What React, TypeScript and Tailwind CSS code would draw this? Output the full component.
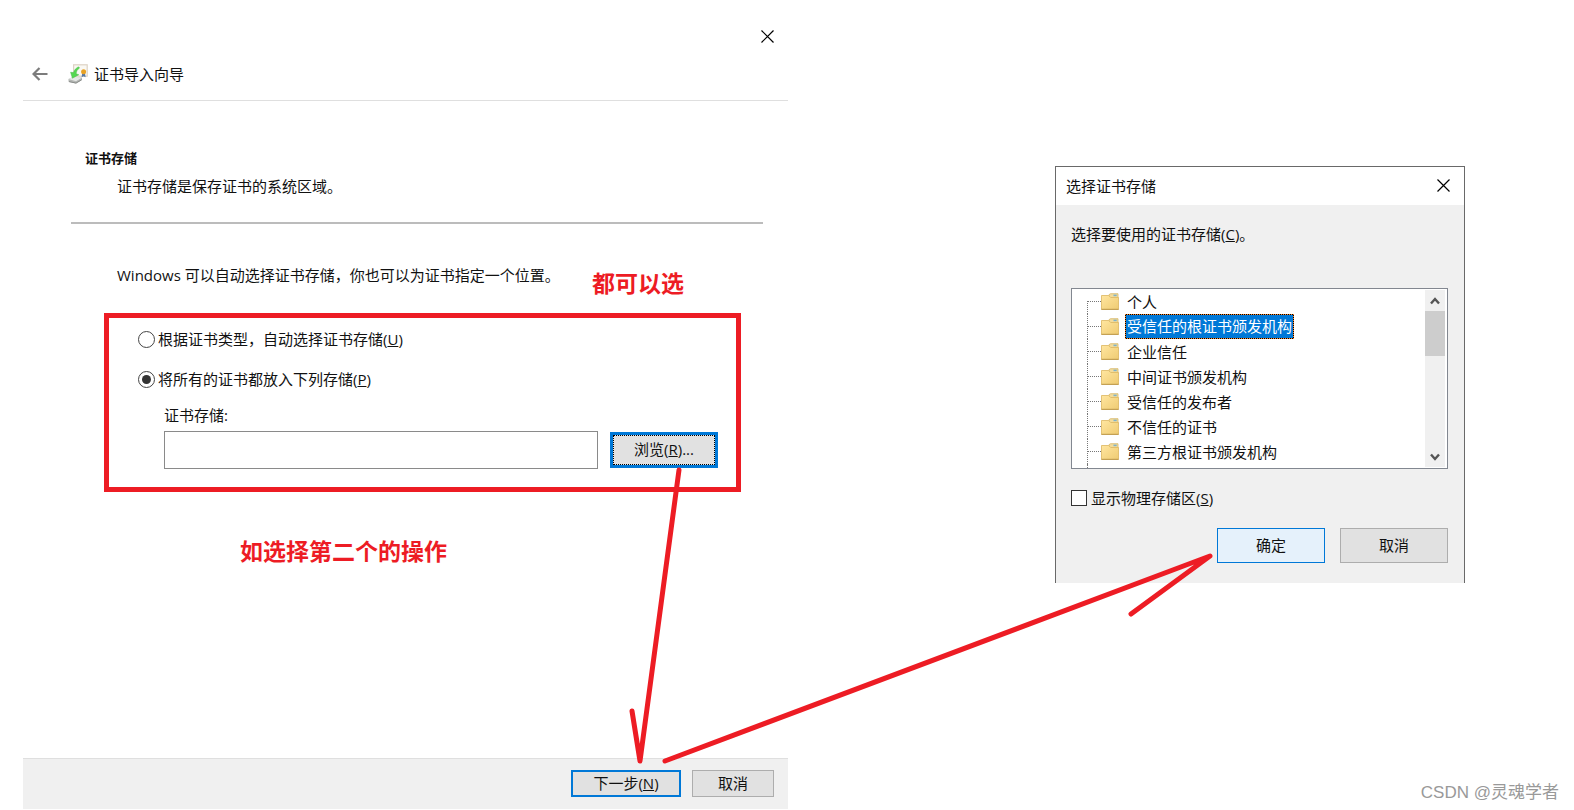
import { useState } from 'react';

const stores = [
  '个人',
  '受信任的根证书颁发机构',
  '企业信任',
  '中间证书颁发机构',
  '受信任的发布者',
  '不信任的证书',
  '第三方根证书颁发机构',
];

function CloseIcon() {
  return (
    <svg viewBox="0 0 13 13" className="size-[13px]" aria-hidden="true">
      <path d="M0.5 0.5l12 12M12.5 0.5l-12 12" stroke="#000" strokeWidth="1.2" fill="none" />
    </svg>
  );
}

function BackIcon() {
  return (
    <svg viewBox="0 0 16 14" className="h-[14px] w-4" aria-hidden="true">
      <path d="M15.5 7H1.5M7.5 1L1.5 7l6 6" stroke="#7c7c7c" strokeWidth="2.2" fill="none" />
    </svg>
  );
}

function CertificateIcon() {
  return (
    <svg viewBox="0 0 20 20" className="size-5" aria-hidden="true">
      <rect x="5.6" y="0.8" width="13.6" height="11.4" fill="#faf8f3" stroke="#ddd2c4" strokeWidth="1.2" />
      <path d="M14.200 9.500l-.6 3.700 2-1 2 1-.6-3.700z" fill="#5577a5" />
      <circle cx="15.600" cy="7.800" r="2.500" fill="#e8a225" />
      <path d="M0.500 15l5-2.200 8.500.8v2.400L8 19.500l-7.500-1.700z" fill="#b4b7b4" />
      <path d="M0.500 15l5-2.200 8.500.8-6 3.600z" fill="#e6e8e5" />
      <path d="M1 17.600l7 1.500 5.600-3.300" stroke="#8a8d8a" fill="none" />
      <path d="M10.500 2.800C8 4.200 6 6 5.600 8.600L2.600 8.200l1.800 6 6.400-3.400-2.600-1C8.300 7.500 9.200 5.400 11.600 4z" fill="#55d850" stroke="#4cbb4c" strokeWidth="0.500" />
    </svg>
  );
}

function FolderIcon() {
  return (
    <svg viewBox="0 0 18 17" className="h-[17px] w-[18px] shrink-0" aria-hidden="true">
      <defs>
        <linearGradient id="folder" x1="0" y1="0" x2="1" y2="1">
          <stop offset="0" stopColor="#ffe6a0" />
          <stop offset="1" stopColor="#efcb72" />
        </linearGradient>
      </defs>
      <path d="M8 4.500V1.700L9.500 0.700h7.500v5H8z" fill="#f3dc9c" stroke="#d6b566" strokeWidth="0.800" />
      <path d="M12.500 1.600h3.200v1.600h-3.200z" fill="#7fb2c8" />
      <path d="M0.500 2.500h7.200l2 2h7.800v12H0.500z" fill="url(#folder)" stroke="#dcb65f" strokeWidth="0.800" />
      <path d="M0.500 16.300h17" stroke="#b8944a" strokeWidth="0.900" />
    </svg>
  );
}

function Chevron({ up = false }: { up?: boolean }) {
  return (
    <svg viewBox="0 0 10 8" className="h-2 w-[10px]" aria-hidden="true">
      <path d={up ? 'M1 6.500l4-4.500 4 4.500' : 'M1 1.500L5 6l4-4.500'} stroke="#555" strokeWidth="2.400" fill="none" />
    </svg>
  );
}

function ImportWizard() {
  const [mode, setMode] = useState('manual');
  const radio =
    'size-[17px] shrink-0 appearance-none rounded-full border border-[#444] bg-white bg-clip-content p-[3px] checked:bg-[#333]';
  return (
    <section className="relative flex flex-1 flex-col">
      <div className="flex h-12 items-center justify-end pt-6 pr-[14px]">
        <button aria-label="关闭"><CloseIcon /></button>
      </div>
      <header className="flex h-[53px] items-center border-b border-[#dfdfdf] pl-[9px]">
        <button aria-label="返回" className="mr-5"><BackIcon /></button>
        <CertificateIcon />
        <h1 className="ml-[6px] leading-5">证书导入向导</h1>
      </header>

      <div className="flex-1 pt-[47px]">
        <h2 className="pl-[62px] text-[13px] leading-5 font-bold">证书存储</h2>
        <p className="mt-2 pl-[94px]">证书存储是保存证书的系统区域。</p>
        <hr className="mt-[26px] mr-[25px] ml-12 border-t-2 border-[#bcbcbc]" />
        <p className="mt-[41px] pl-[94px]">Windows 可以自动选择证书存储，你也可以为证书指定一个位置。</p>

        <div className="mt-7 mr-[47px] ml-[81px] border-[5px] border-[#ed1c24] pt-[11px] pr-[18px] pb-[18px] pl-[29px]">
          <label className="flex items-center gap-[3px]">
            <input type="radio" name="mode" checked={mode === 'auto'} onChange={() => setMode('auto')} className={radio} />
            <span>根据证书类型，自动选择证书存储(<u>U</u>)</span>
          </label>
          <label className="mt-5 flex items-center gap-[3px]">
            <input type="radio" name="mode" checked={mode === 'manual'} onChange={() => setMode('manual')} className={radio} />
            <span>将所有的证书都放入下列存储(<u>P</u>)</span>
          </label>
          <div className="mt-4 pl-[26px]">
            <label htmlFor="store" className="block">证书存储:</label>
            <div className="mt-[6px] flex items-center gap-3">
              <input id="store" type="text" className="h-[38px] min-w-0 flex-1 border border-[#8a8a8a] bg-white px-2 outline-none" />
              <button className="h-9 w-[108px] border-[3px] border-[#0078d7] bg-[#e1e1e1]">
                <span className="flex h-full items-center justify-center border border-dotted border-black pb-[2px]">
                  <span>浏览(<u>R</u>)...</span>
                </span>
              </button>
            </div>
          </div>
        </div>
        <p className="mt-[43px] pl-[217px] text-[23px] leading-8 font-bold text-[#ed1c24]">如选择第二个的操作</p>
      </div>

      <p className="absolute top-[267px] left-[569px] text-[23px] leading-8 font-bold text-[#ed1c24]">都可以选</p>

      <footer className="flex h-[51px] items-center justify-end gap-[11px] border-t border-[#dfdfdf] bg-[#f0f0f0] pr-[14px] pb-[2px]">
        <button className="flex h-[27px] w-[110px] items-center justify-center border-2 border-[#0078d7] bg-[#e1e1e1]">
          <span>下一步(<u>N</u>)</span>
        </button>
        <button className="flex h-[27px] w-[82px] items-center justify-center border border-[#adadad] bg-[#e1e1e1]">取消</button>
      </footer>
    </section>
  );
}

function StoreDialog() {
  const [selected, setSelected] = useState(1);
  return (
    <section className="mt-[166px] w-[410px] shrink-0 self-start border border-b-0 border-[#696969] bg-[#f0f0f0]">
      <header className="flex h-[38px] items-center justify-between bg-white pr-[14px] pb-px pl-[10px]">
        <h2>选择证书存储</h2>
        <button aria-label="关闭"><CloseIcon /></button>
      </header>
      <div className="pt-[19px] pr-4 pb-5 pl-[15px]">
        <p id="stores-label">选择要使用的证书存储(<u>C</u>)。</p>
        <div className="mt-11 flex h-[181px] border border-[#828790] bg-white pr-[2px]">
          <div className="flex-1 overflow-hidden pl-[15px]">
            <ul role="listbox" aria-labelledby="stores-label">
              {stores.map((name, i) => (
                <li key={name} role="option" aria-selected={i === selected} onClick={() => setSelected(i)} className="flex h-[25px] items-center">
                  <span className={i === 0 ? 'h-[13px] self-end border-l border-dotted border-[#777]' : 'self-stretch border-l border-dotted border-[#777]'} />
                  <span className="w-[13px] border-t border-dotted border-[#777]" />
                  <FolderIcon />
                  <span
                    className={
                      i === selected
                        ? 'ml-[6px] bg-black'
                        : 'ml-[6px] px-[2px]'
                    }
                  >
                    <span
                      className={
                        i === selected
                          ? 'block border border-dotted border-[#ff8728] bg-[#0078d7] bg-clip-padding px-px leading-[23px] text-white'
                          : 'block'
                      }
                    >
                      {name}
                    </span>
                  </span>
                </li>
              ))}
              <li className="h-2 border-l border-dotted border-[#777]" role="presentation" />
            </ul>
          </div>
          <div className="my-px flex w-5 flex-col bg-[#f0f0f0]">
            <button aria-label="向上滚动" className="flex h-[21px] items-center justify-center"><Chevron up /></button>
            <div className="h-[45px] bg-[#cdcdcd]" />
            <div className="flex-1" />
            <button aria-label="向下滚动" className="flex h-[21px] items-center justify-center"><Chevron /></button>
          </div>
        </div>
        <label className="mt-[19px] flex items-center gap-1">
          <input type="checkbox" className="size-4 appearance-none border border-[#333] bg-white checked:bg-[#0078d7]" />
          <span>显示物理存储区(<u>S</u>)</span>
        </label>
        <div className="mt-5 flex justify-end gap-[15px]">
          <button className="h-[35px] w-[108px] border border-[#0078d7] bg-[#e5f1fb] pb-[2px]">确定</button>
          <button className="h-[35px] w-[108px] border border-[#adadad] bg-[#e1e1e1] pb-[2px]">取消</button>
        </div>
      </div>
    </section>
  );
}

export default function App() {
  return (
    <main className="relative flex min-h-screen gap-[267px] bg-white pr-[109px] pb-px pl-[23px] font-['Open_Sans','Noto_Sans_CJK_SC',sans-serif] text-[15px] leading-5 text-[#111]">
      <ImportWizard />
      <StoreDialog />
      <svg
        viewBox="0 0 1574 810"
        preserveAspectRatio="none"
        className="pointer-events-none absolute inset-0 h-full w-full"
        aria-hidden="true"
      >
        <path
          d="M679 470L640 761L632 711M665 761L1210 556L1131 614"
          fill="none"
          stroke="#ed1c24"
          strokeWidth="5"
          strokeLinecap="round"
          strokeLinejoin="round"
        />
      </svg>
      <p className="absolute right-[15px] bottom-[5px] font-['Liberation_Sans','Noto_Sans_CJK_SC',sans-serif] text-[17px] leading-6 text-[#999]">
        CSDN @灵魂学者
      </p>
    </main>
  );
}
